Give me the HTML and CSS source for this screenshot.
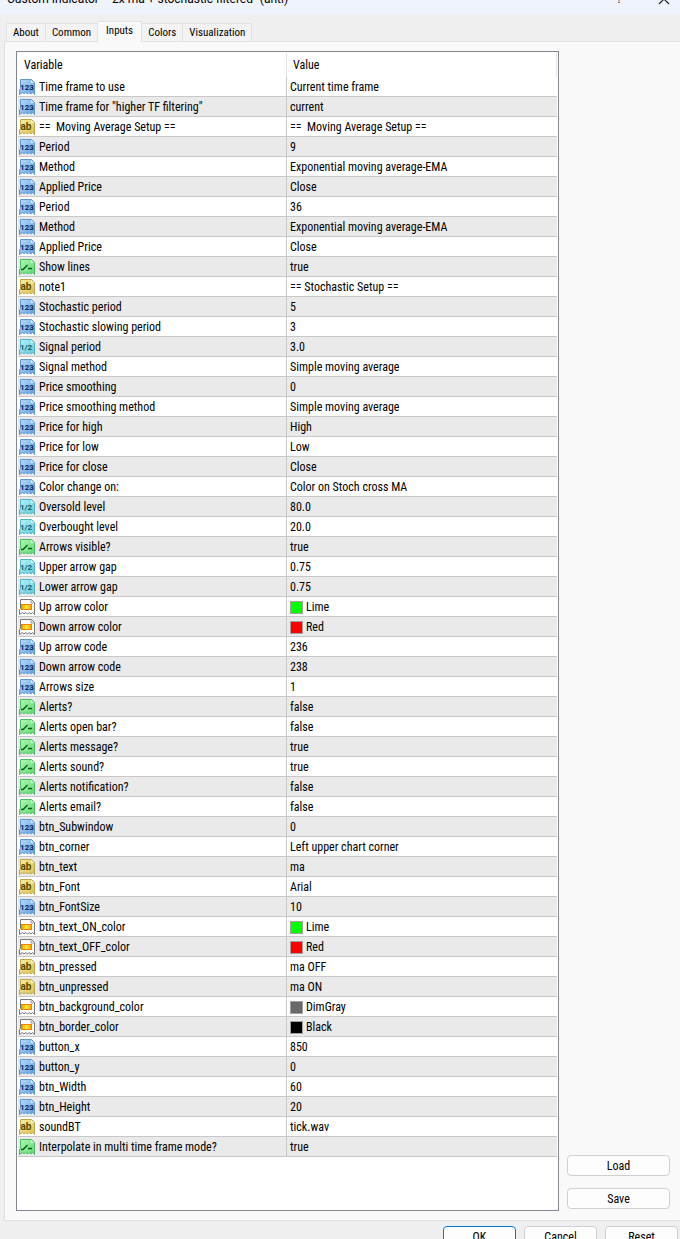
FILE: index.html
```
<!DOCTYPE html>
<html lang="en">
  <head>
    <meta charset="UTF-8" />
    <meta name="viewport" content="width=device-width, initial-scale=1.0" />
    <title>Custom Indicator - 2x ma + stochastic filtered (anti)</title>
    <link rel="stylesheet" href="styles.css">
  </head>
  <body>
    <!-- Icon sprite -->
    <svg class="sprite" aria-hidden="true">
      <defs>
        <linearGradient id="blueFill" x1="0" y1="0" x2="1" y2="1">
          <stop offset="0" stop-color="#b9dcfa" />
          <stop offset="1" stop-color="#5f9fdc" />
        </linearGradient>
        <linearGradient id="yellowFill" x1="0" y1="0" x2="1" y2="1">
          <stop offset="0" stop-color="#f8f0a8" />
          <stop offset="1" stop-color="#d8bf50" />
        </linearGradient>
        <linearGradient id="greenFill" x1="0" y1="0" x2="1" y2="1">
          <stop offset="0" stop-color="#b4f8b4" />
          <stop offset="1" stop-color="#58d870" />
        </linearGradient>
        <linearGradient id="cyanFill" x1="0" y1="0" x2="1" y2="1">
          <stop offset="0" stop-color="#b8f4f8" />
          <stop offset="1" stop-color="#5cc8d8" />
        </linearGradient>
        <linearGradient id="colorFill" x1="0" y1="0" x2="1" y2="0">
          <stop offset="0" stop-color="#ff9a00" />
          <stop offset="0.5" stop-color="#ffee30" />
          <stop offset="1" stop-color="#ff9a00" />
        </linearGradient>
        <path id="sheet" d="M1.500 .5H12.500l3 3V15.500l-2-2-1.500 1.500-2-1.500-1.500 1.500-2-1.500L5 15l-1.500-1.500-3 2v-5l1-1z" />
        <path id="fold" d="M12 1v3h3z" />
      </defs>
      <symbol id="int" viewBox="0 0 16 16">
        <use href="#sheet" fill="url(#blueFill)" stroke="#5f97d0" />
        <use href="#fold" fill="#d5eafc" />
        <text x="8" y="11" text-anchor="middle" font-size="8" fill="#06245a">123</text>
      </symbol>
      <symbol id="str" viewBox="0 0 16 16">
        <use href="#sheet" fill="url(#yellowFill)" stroke="#bfa545" />
        <use href="#fold" fill="#fcf8cc" />
        <text x="7" y="11" text-anchor="middle" font-size="10" fill="#5c4b00">ab</text>
      </symbol>
      <symbol id="bool" viewBox="0 0 16 16">
        <use href="#sheet" fill="url(#greenFill)" stroke="#4cbc62" />
        <use href="#fold" fill="#d4fbd4" />
        <path d="M2 10.500h2L8.500 6M9 9.500h4" fill="none" stroke="#0a5a1c" stroke-width="1.400" />
      </symbol>
      <symbol id="dbl" viewBox="0 0 16 16">
        <use href="#sheet" fill="url(#cyanFill)" stroke="#4fb3c5" />
        <use href="#fold" fill="#d8f8fc" />
        <text x="7" y="11" text-anchor="middle" font-size="8" fill="#0b5a70">1/2</text>
      </symbol>
      <symbol id="clr" viewBox="0 0 16 16">
        <use href="#sheet" fill="#fff" stroke="#777" />
        <path d="M12 1v3h3" fill="#eee" stroke="#999" />
        <rect x="2.500" y="5.500" width="10" height="5" fill="url(#colorFill)" stroke="#f08000" />
      </symbol>
    </svg>

    <header class="titlebar">
      <span class="title">Custom Indicator - "2x ma + stochastic filtered" (anti)</span>
      <button class="title-btn" aria-label="Help">?</button>
      <button class="title-btn" aria-label="Close">
        <svg width="12" height="12" viewBox="0 0 12 12"><path d="M1 1l10 10M11 1L1 11" stroke="#222" stroke-width="1.200" /></svg>
      </button>
    </header>

    <nav class="tabs">
      <button class="tab">About</button>
      <button class="tab">Common</button>
      <button class="tab active">Inputs</button>
      <button class="tab">Colors</button>
      <button class="tab">Visualization</button>
    </nav>

    <main class="panel">
      <div class="list">
        <table class="inputs">
          <thead>
            <tr><th class="col-name">Variable</th><th>Value</th></tr>
          </thead>
          <tbody>
            <tr><td><svg class="icon"><use href="#int" /></svg>Time frame to use</td><td>Current time frame</td></tr>
            <tr><td><svg class="icon"><use href="#int" /></svg>Time frame for "higher TF filtering"</td><td>current</td></tr>
            <tr><td><svg class="icon"><use href="#str" /></svg>==&nbsp; Moving Average Setup ==</td><td>==&nbsp; Moving Average Setup ==</td></tr>
            <tr><td><svg class="icon"><use href="#int" /></svg>Period</td><td>9</td></tr>
            <tr><td><svg class="icon"><use href="#int" /></svg>Method</td><td>Exponential moving average-EMA</td></tr>
            <tr><td><svg class="icon"><use href="#int" /></svg>Applied Price</td><td>Close</td></tr>
            <tr><td><svg class="icon"><use href="#int" /></svg>Period</td><td>36</td></tr>
            <tr><td><svg class="icon"><use href="#int" /></svg>Method</td><td>Exponential moving average-EMA</td></tr>
            <tr><td><svg class="icon"><use href="#int" /></svg>Applied Price</td><td>Close</td></tr>
            <tr><td><svg class="icon"><use href="#bool" /></svg>Show lines</td><td>true</td></tr>
            <tr><td><svg class="icon"><use href="#str" /></svg>note1</td><td>== Stochastic Setup ==</td></tr>
            <tr><td><svg class="icon"><use href="#int" /></svg>Stochastic period</td><td>5</td></tr>
            <tr><td><svg class="icon"><use href="#int" /></svg>Stochastic slowing period</td><td>3</td></tr>
            <tr><td><svg class="icon"><use href="#dbl" /></svg>Signal period</td><td>3.0</td></tr>
            <tr><td><svg class="icon"><use href="#int" /></svg>Signal method</td><td>Simple moving average</td></tr>
            <tr><td><svg class="icon"><use href="#int" /></svg>Price smoothing</td><td>0</td></tr>
            <tr><td><svg class="icon"><use href="#int" /></svg>Price smoothing method</td><td>Simple moving average</td></tr>
            <tr><td><svg class="icon"><use href="#int" /></svg>Price for high</td><td>High</td></tr>
            <tr><td><svg class="icon"><use href="#int" /></svg>Price for low</td><td>Low</td></tr>
            <tr><td><svg class="icon"><use href="#int" /></svg>Price for close</td><td>Close</td></tr>
            <tr><td><svg class="icon"><use href="#int" /></svg>Color change on:</td><td>Color on Stoch cross MA</td></tr>
            <tr><td><svg class="icon"><use href="#dbl" /></svg>Oversold level</td><td>80.0</td></tr>
            <tr><td><svg class="icon"><use href="#dbl" /></svg>Overbought level</td><td>20.0</td></tr>
            <tr><td><svg class="icon"><use href="#bool" /></svg>Arrows visible?</td><td>true</td></tr>
            <tr><td><svg class="icon"><use href="#dbl" /></svg>Upper arrow gap</td><td>0.75</td></tr>
            <tr><td><svg class="icon"><use href="#dbl" /></svg>Lower arrow gap</td><td>0.75</td></tr>
            <tr><td><svg class="icon"><use href="#clr" /></svg>Up arrow color</td><td><span class="swatch lime"></span>Lime</td></tr>
            <tr><td><svg class="icon"><use href="#clr" /></svg>Down arrow color</td><td><span class="swatch red"></span>Red</td></tr>
            <tr><td><svg class="icon"><use href="#int" /></svg>Up arrow code</td><td>236</td></tr>
            <tr><td><svg class="icon"><use href="#int" /></svg>Down arrow code</td><td>238</td></tr>
            <tr><td><svg class="icon"><use href="#int" /></svg>Arrows size</td><td>1</td></tr>
            <tr><td><svg class="icon"><use href="#bool" /></svg>Alerts?</td><td>false</td></tr>
            <tr><td><svg class="icon"><use href="#bool" /></svg>Alerts open bar?</td><td>false</td></tr>
            <tr><td><svg class="icon"><use href="#bool" /></svg>Alerts message?</td><td>true</td></tr>
            <tr><td><svg class="icon"><use href="#bool" /></svg>Alerts sound?</td><td>true</td></tr>
            <tr><td><svg class="icon"><use href="#bool" /></svg>Alerts notification?</td><td>false</td></tr>
            <tr><td><svg class="icon"><use href="#bool" /></svg>Alerts email?</td><td>false</td></tr>
            <tr><td><svg class="icon"><use href="#int" /></svg>btn_Subwindow</td><td>0</td></tr>
            <tr><td><svg class="icon"><use href="#int" /></svg>btn_corner</td><td>Left upper chart corner</td></tr>
            <tr><td><svg class="icon"><use href="#str" /></svg>btn_text</td><td>ma</td></tr>
            <tr><td><svg class="icon"><use href="#str" /></svg>btn_Font</td><td>Arial</td></tr>
            <tr><td><svg class="icon"><use href="#int" /></svg>btn_FontSize</td><td>10</td></tr>
            <tr><td><svg class="icon"><use href="#clr" /></svg>btn_text_ON_color</td><td><span class="swatch lime"></span>Lime</td></tr>
            <tr><td><svg class="icon"><use href="#clr" /></svg>btn_text_OFF_color</td><td><span class="swatch red"></span>Red</td></tr>
            <tr><td><svg class="icon"><use href="#str" /></svg>btn_pressed</td><td>ma OFF</td></tr>
            <tr><td><svg class="icon"><use href="#str" /></svg>btn_unpressed</td><td>ma ON</td></tr>
            <tr><td><svg class="icon"><use href="#clr" /></svg>btn_background_color</td><td><span class="swatch dimgray"></span>DimGray</td></tr>
            <tr><td><svg class="icon"><use href="#clr" /></svg>btn_border_color</td><td><span class="swatch black"></span>Black</td></tr>
            <tr><td><svg class="icon"><use href="#int" /></svg>button_x</td><td>850</td></tr>
            <tr><td><svg class="icon"><use href="#int" /></svg>button_y</td><td>0</td></tr>
            <tr><td><svg class="icon"><use href="#int" /></svg>btn_Width</td><td>60</td></tr>
            <tr><td><svg class="icon"><use href="#int" /></svg>btn_Height</td><td>20</td></tr>
            <tr><td><svg class="icon"><use href="#str" /></svg>soundBT</td><td>tick.wav</td></tr>
            <tr><td><svg class="icon"><use href="#bool" /></svg>Interpolate in multi time frame mode?</td><td>true</td></tr>
          </tbody>
        </table>
      </div>
      <div class="side-buttons">
        <button class="btn">Load</button>
        <button class="btn">Save</button>
      </div>
    </main>

    <footer class="footer">
      <button class="btn btn-default">OK</button>
      <button class="btn">Cancel</button>
      <button class="btn">Reset</button>
    </footer>
  </body>
</html>
```
FILE: styles.css
```
* {
  box-sizing: border-box;
}

body {
  margin: 0;
  height: 100vh;
  display: flex;
  flex-direction: column;
  overflow: hidden;
  background-color: #efefef;
  color: #000;
  font-family: "Roboto Condensed", Roboto, sans-serif;
  font-size: 12px;
  line-height: 16px;
}

button {
  font: inherit;
  color: inherit;
}

.sprite {
  position: absolute;
  width: 0;
  height: 0;
}

/* Title bar */
.titlebar {
  flex: none;
  display: flex;
  align-items: flex-end;
  gap: 36px;
  height: 14px;
  padding: 0 10px 7px 7px;
  overflow: hidden;
  background-color: #eff3fb;
  font-family: Roboto, sans-serif;
}

.title {
  flex: 1;
  white-space: nowrap;
}

.title-btn {
  height: 16px;
  padding: 0;
  border: none;
  background: none;
}

.title-btn svg {
  display: block;
}

/* Tabs */
.tabs {
  flex: none;
  display: flex;
  align-items: flex-end;
  height: 28px;
  margin-bottom: -1px;
  padding-left: 6px;
  font-size: 11px;
}

.tab {
  height: 19px;
  padding: 0 6px;
  border: 1px solid #e2e2e2;
  border-left: none;
  background-color: #f3f3f3;
}

.tab:first-child {
  border-left: 1px solid #e2e2e2;
}

.tab.active {
  height: 21px;
  padding: 0 8px 3px;
  border-bottom: none;
  background-color: #f9f9f9;
  z-index: 1;
}

/* Inputs page */
.panel {
  flex: 1;
  display: flex;
  gap: 8px;
  margin-left: 4px;
  padding: 9px 10px 9px 11px;
  border: 1px solid #e2e2e2;
  border-right: none;
  background-color: #f9f9f9;
}

.list {
  flex: 1;
  padding: 1px;
  border: 1px solid #828790;
  background-color: #fff;
}

.inputs {
  width: 100%;
  table-layout: fixed;
  border-collapse: separate;
  border-spacing: 0;
}

.inputs th {
  height: 24px;
  padding: 0 6px;
  border-right: 1px solid #e5e5e5;
  font-weight: normal;
  text-align: left;
}

.inputs .col-name {
  width: 269px;
}

.inputs td {
  height: 20px;
  padding: 0 0 0 3px;
  border-bottom: 1px solid #c8c8c8;
  white-space: nowrap;
}

.inputs td:first-child {
  padding-left: 1px;
  border-right: 1px solid #c8c8c8;
}

.inputs tbody tr:nth-child(even) {
  background-color: #eaeaea;
}

.icon {
  width: 16px;
  height: 16px;
  margin-right: 4px;
  vertical-align: -4px;
  font-family: Roboto, sans-serif;
  font-weight: bold;
}

.swatch {
  display: inline-block;
  width: 13px;
  height: 13px;
  margin-right: 3px;
  border: 1px solid #a0a0a0;
  vertical-align: -3px;
}

.swatch.lime {
  background-color: #00ff00;
}

.swatch.red {
  background-color: #ff0000;
}

.swatch.dimgray {
  background-color: #696969;
}

.swatch.black {
  background-color: #000000;
}

/* Buttons */
.btn {
  height: 21px;
  padding: 0;
  border: 1px solid #d0d0d0;
  border-radius: 4px;
  background-color: #fdfdfd;
}

.btn-default {
  border: 1px solid #0078d4;
}

.side-buttons {
  display: flex;
  flex-direction: column;
  justify-content: flex-end;
  gap: 12px;
  width: 103px;
  padding-bottom: 2px;
}

.footer {
  flex: none;
  display: flex;
  justify-content: flex-end;
  gap: 8px;
  height: 18px;
  padding: 5px 2px 0 0;
}

.footer .btn {
  width: 73px;
}
```
